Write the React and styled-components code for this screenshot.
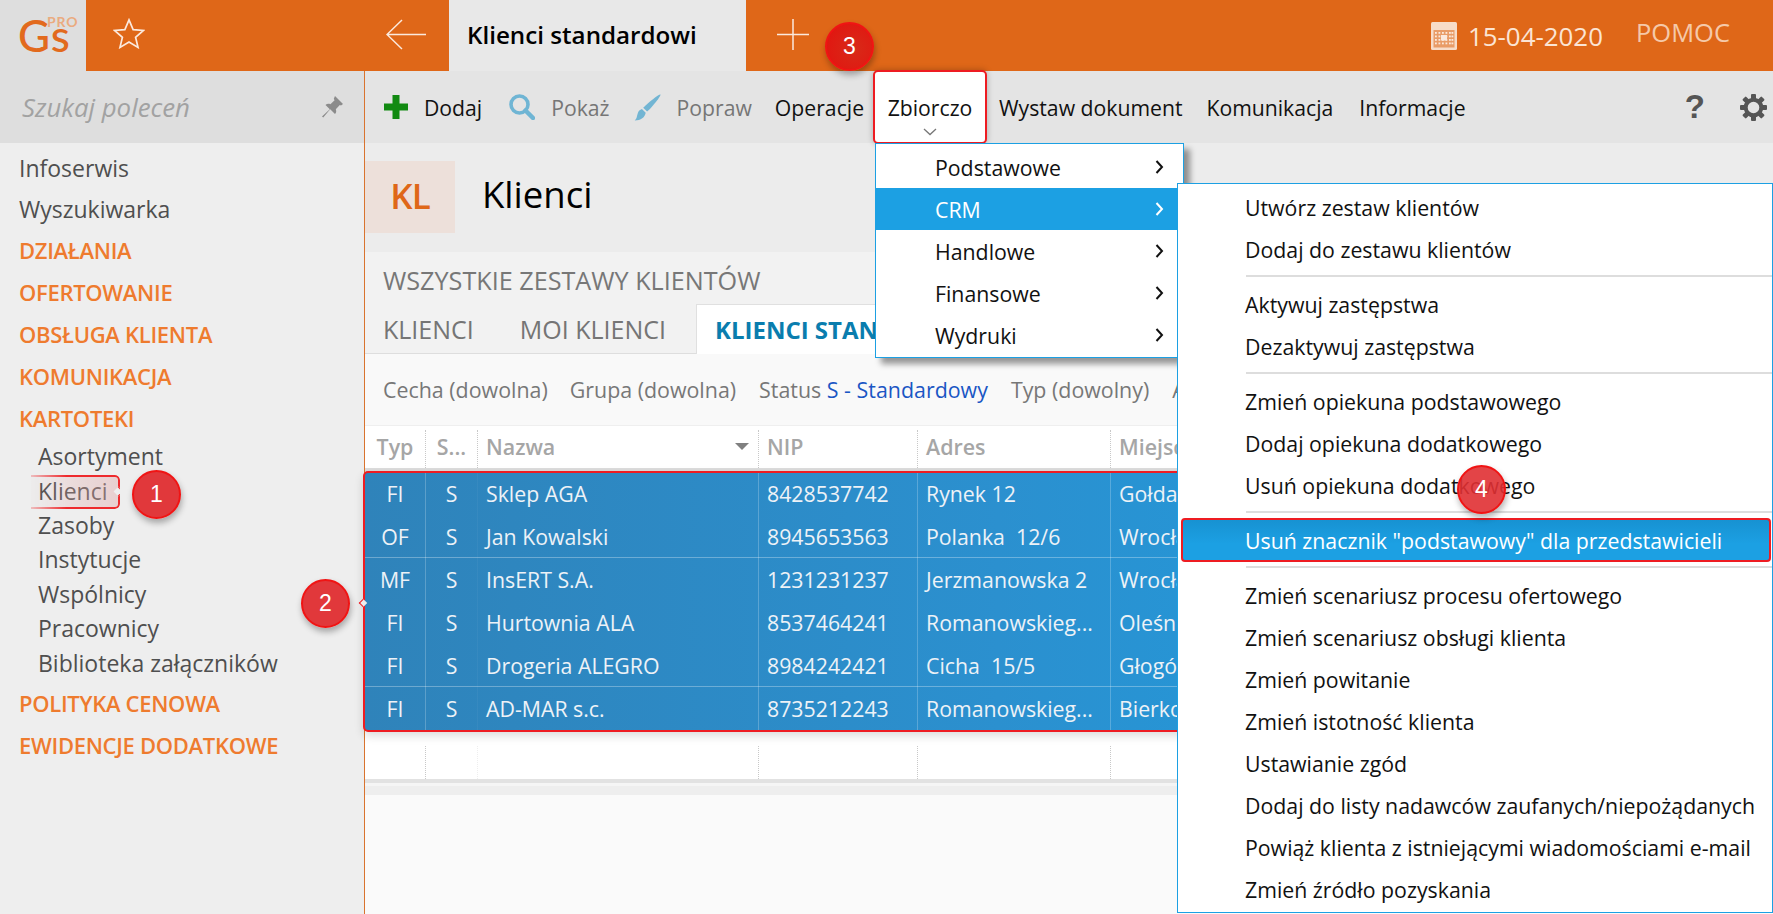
import React from "react";
import styled, { createGlobalStyle } from "styled-components";

const GlobalStyle = createGlobalStyle`
  html, body {
    margin: 0;
    padding: 0;
    background: #fff;
  }
  body {
    font-family: "Open Sans", "Noto Sans", "Liberation Sans", sans-serif;
    color: #111;
  }
  * { box-sizing: border-box; }
`;

const Page = styled.div`
  position: relative;
  width: 1773px;
  height: 914px;
  overflow: hidden;
  display: flex;
  flex-direction: column;
`;

/* top bar */
const TopBar = styled.header`
  flex: 0 0 71px;
  display: flex;
  align-items: stretch;
  background: #df6718;
`;
const LogoCell = styled.div`
  width: 86px;
  background: #dedede;
  padding: 12px 0 0 18px;
`;
const Logo = styled.div`
  position: relative;
  font-family: "Lato", sans-serif;
  font-size: 44px;
  line-height: 46px;
  font-weight: 500;
  color: #e26a1d;
  letter-spacing: 1px;
  span {
    position: absolute;
    left: 29px;
    top: 3px;
    font-size: 14px;
    line-height: 14px;
    font-weight: 700;
    letter-spacing: 0.8px;
    color: #eaab80;
  }
`;
const StarButton = styled.div`
  width: 300px;
  padding: 18px 0 0 27px;
`;
const TabArrow = styled.div`
  width: 63px;
  padding-top: 19px;
`;
const OpenTab = styled.div`
  width: 297px;
  background: #e8e8e8;
  padding-left: 18px;
  display: flex;
  align-items: center;
  font-size: 24.2px;
  font-weight: 600;
  color: #000;
  padding-bottom: 3px;
`;
const AddTab = styled.div`
  padding: 19px 0 0 31px;
`;
const TopRight = styled.div`
  margin-left: auto;
  display: flex;
  align-items: center;
  padding-right: 43px;
`;
const DateText = styled.span`
  margin-left: 11px;
  font-size: 25.9px;
  color: #fbe4d4;
`;
const HelpLink = styled.span`
  margin-left: 33px;
  margin-bottom: 7px;
  font-size: 25.5px;
  color: #f5c9a9;
`;

/* body */
const Body = styled.div`
  flex: 1;
  min-height: 0;
  display: flex;
`;
const Sidebar = styled.nav`
  flex: 0 0 365px;
  background: #eeeeee;
  border-right: 1px solid #d9732e;
`;
const SearchBox = styled.div`
  height: 72px;
  background: #dedede;
  display: flex;
  align-items: center;
  justify-content: space-between;
  padding: 0 21px 0 22px;
  font-style: italic;
  font-size: 25.8px;
  color: #a2a2a2;
`;
const NavList = styled.div`
  padding: 4px 0 0 19px;
`;
const NavLink = styled.div`
  height: 41px;
  display: flex;
  align-items: center;
  font-size: 23px;
  color: #4f4f4f;
`;
const NavSection = styled.div`
  height: 42px;
  display: flex;
  align-items: center;
  font-size: 22px;
  font-weight: 600;
  letter-spacing: -0.3px;
  color: #ee7b2e;
  margin-top: ${(p) => (p.$gap ? "2px" : "0")};
`;
const NavSub = styled.div`
  position: relative;
  width: max-content;
  height: 34.4px;
  display: flex;
  align-items: center;
  margin-left: 19px;
  font-size: 23px;
  color: #4f4f4f;
`;
const NavMark = styled.div`
  position: absolute;
  left: -7px;
  right: -12px;
  top: 2px;
  bottom: -1px;
  border-radius: 0 5px 5px 0;
  border: 2px solid #ee2a2d;
  border-left: 0;
  background: linear-gradient(90deg, rgba(225, 170, 170, 0.1), rgba(225, 170, 170, 0.45));
  -webkit-mask-image: linear-gradient(90deg, rgba(0,0,0,0.25), #000 40%);
  &::after {
    content: "";
    position: absolute;
    right: -4px;
    top: 11px;
    width: 6px;
    height: 6px;
    background: #eee;
    border-top: 1px solid #ee2a2d;
    border-right: 1px solid #ee2a2d;
    transform: rotate(45deg);
  }
`;

const Main = styled.main`
  flex: 1;
  min-width: 0;
  display: flex;
  flex-direction: column;
  background: #ececec;
`;
const Toolbar = styled.div`
  flex: 0 0 72px;
  background: #e4e4e4;
  display: flex;
  align-items: center;
  padding: 0 6px 0 19px;
  font-size: 21.2px;
`;
const ToolButton = styled.div`
  display: flex;
  align-items: center;
  gap: ${(p) => p.$iconGap || 0}px;
  margin-right: ${(p) => p.$after}px;
  color: ${(p) => (p.$muted ? "#767676" : "#111")};
`;
const MarkedButton = styled.div`
  position: relative;
  align-self: stretch;
  margin: -1px 12px -1px 0;
  width: 114px;
  background: #fff;
  border: 2px solid #ee1c22;
  border-radius: 5px;
  box-shadow: 0 0 6px rgba(0, 0, 0, 0.25);
  display: flex;
  align-items: center;
  justify-content: center;
  color: #111;
  svg {
    position: absolute;
    bottom: 6px;
    left: 48px;
  }
`;
const ToolIcons = styled.div`
  margin-left: auto;
  display: flex;
  align-items: center;
  gap: 35px;
  font-family: "Liberation Sans", sans-serif;
  font-size: 33px;
  font-weight: 700;
  color: #555;
`;

const Heading = styled.div`
  flex: 0 0 109px;
  display: flex;
  align-items: flex-start;
  padding-top: 18px;
`;
const HeadingBadge = styled.div`
  width: 90px;
  height: 72px;
  background: #ede0da;
  color: #df6718;
  font-size: 35px;
  font-weight: 600;
  letter-spacing: -1px;
  display: flex;
  align-items: center;
  justify-content: center;
  padding-bottom: 4px;
`;
const HeadingText = styled.h1`
  margin: 0 0 0 27px;
  height: 72px;
  padding-bottom: 6px;
  display: flex;
  align-items: center;
  font-size: 36.5px;
  font-weight: 400;
  color: #000;
`;

const Panel = styled.section`
  flex: 1;
  background: #fafafa;
  display: flex;
  flex-direction: column;
`;
const PanelTitle = styled.div`
  height: 52px;
  background: #f2f2f2;
  padding: 12px 0 0 18px;
  font-size: 25.2px;
  line-height: 32px;
  color: #777;
  white-space: nowrap;
`;
const Tabs = styled.div`
  height: 50px;
  background: #f2f2f2;
  border-bottom: 1px solid #dedede;
  display: flex;
  padding-left: 18px;
  font-size: 25px;
  white-space: nowrap;
`;
const PanelTab = styled.div`
  display: flex;
  align-items: center;
  color: #757575;
  margin-right: 46px;
`;
const ActiveTab = styled.div`
  display: flex;
  align-items: center;
  padding: 0 18px 0 18px;
  margin: 0 0 -1px -16px;
  background: #fff;
  border: 1px solid #e0e0e0;
  border-bottom: 0;
  font-size: 24px;
  font-weight: 700;
  color: #0a7dae;
`;
const FilterBar = styled.div`
  height: 71px;
  background: #f9f9f9;
  display: flex;
  align-items: center;
  padding-left: 18px;
  font-size: 21.4px;
  color: #777;
  white-space: nowrap;
`;
const Filter = styled.span`
  margin-right: ${(p) => p.$after}px;
  b {
    font-weight: 400;
    color: #1a56c4;
  }
`;

const cols = "61px 52px 281px 159px 193px 1fr";
const HeaderRow = styled.div`
  height: 47px;
  background: #fff;
  border-top: 1px solid #efefef;
  border-bottom: 4px solid #dcdcdc;
  display: grid;
  grid-template-columns: ${cols};
  font-size: 21.4px;
  font-weight: 600;
  color: #a6a6a6;
`;
const HeaderCell = styled.div`
  position: relative;
  display: flex;
  align-items: center;
  justify-content: ${(p) => (p.$center ? "center" : "space-between")};
  padding: ${(p) => (p.$center ? "0" : "0 9px 0 8px")};
  border-right: 1px dotted #c8c8c8;
  margin-top: 4px;
  padding-bottom: 5px;
  white-space: nowrap;
  overflow: hidden;
`;
const SortArrow = styled.i`
  width: 0;
  height: 0;
  border-left: 7px solid transparent;
  border-right: 7px solid transparent;
  border-top: 7px solid #808080;
`;
const RowsArea = styled.div`
  position: relative;
  height: 259px;
  background: linear-gradient(90deg, #2f83ba, #2b90cf 45%, #1ca0e3 95%);
`;
const Row = styled.div`
  height: 43px;
  display: grid;
  grid-template-columns: ${cols};
  font-size: 21.3px;
  color: #edf2f7;
  box-shadow: ${(p) => (p.$line ? "inset 0 -1px 0 rgba(255,255,255,0.3)" : "none")};
`;
const Cell = styled.div`
  display: flex;
  align-items: center;
  justify-content: ${(p) => (p.$center ? "center" : "flex-start")};
  padding-left: ${(p) => (p.$center ? 0 : 8)}px;
  border-right: 1px solid rgba(255, 255, 255, ${(p) => (p.$faint ? 0.04 : 0.22)});
  white-space: pre;
  overflow: hidden;
`;
const RowsMark = styled.div`
  position: absolute;
  left: -2px;
  right: 0;
  top: -1px;
  bottom: -1px;
  border: 2px solid #ee1c22;
  border-radius: 5px;
  box-shadow: 0 4px 10px rgba(0, 0, 0, 0.14);
  &::before {
    content: "";
    position: absolute;
    left: -5px;
    top: 127px;
    width: 5px;
    height: 5px;
    background: #eee;
    border-left: 1px solid #ee1c22;
    border-bottom: 1px solid #ee1c22;
    transform: rotate(45deg);
  }
`;
const BlankRow = styled.div`
  height: 49px;
  background: #fff;
  display: grid;
  grid-template-columns: ${cols};
  padding-top: 15px;
  border-bottom: 1px solid #e2e2e2;
`;
const BlankCell = styled.div`
  border-right: 1px dotted ${(p) => (p.$faint ? "#eee" : "#c8c8c8")};
`;
const GridEdge = styled.div`
  height: 6px;
  background: #e2e2e2;
  border-bottom: 3px solid #f5f5f5;
`;
const ScrollStrip = styled.div`
  height: 9px;
  background: #eeeeee;
`;

/* menus */
const Menu = styled.div`
  position: absolute;
  left: ${(p) => p.$left}px;
  top: ${(p) => p.$top}px;
  width: ${(p) => p.$width}px;
  height: ${(p) => p.$height}px;
  background: #fff;
  border: 1px solid #1ca0e3;
  padding-top: 2px;
  font-size: 21.3px;
  color: #111;
  box-shadow: ${(p) => (p.$shadow ? "6px 6px 6px rgba(0,0,0,0.4)" : "none")};
  overflow: hidden;
`;
const MenuItem = styled.div`
  height: 42px;
  display: flex;
  align-items: center;
  justify-content: space-between;
  padding: 0 19px 0 ${(p) => p.$indent}px;
  background: ${(p) => (p.$active ? "#1ca0e3" : "transparent")};
  color: ${(p) => (p.$active ? "#fff" : "inherit")};
  white-space: pre;
`;
const MarkedItem = styled.div`
  height: 44px;
  margin: -1px 1px -1px 3px;
  padding-left: 62px;
  display: flex;
  align-items: center;
  background: linear-gradient(180deg, #1792d2, #1ca0e3 60%);
  border: 2px solid #ee1c22;
  border-radius: 4px;
  color: #fff;
`;
const MenuSeparator = styled.div`
  height: 2px;
  margin: 5px 0 6px 68px;
  background: #dddddd;
`;

/* numbered markers */
const Marker = styled.div`
  position: absolute;
  left: ${(p) => p.$left}px;
  top: ${(p) => p.$top}px;
  width: 49px;
  height: 49px;
  border-radius: 50%;
  border: 2px solid #f01414;
  background: ${(p) => p.$fill || "rgba(224, 48, 51, 0.96)"};
  box-shadow: 1px 4px 6px rgba(0, 0, 0, 0.3);
  display: flex;
  align-items: center;
  justify-content: center;
  font-family: "Liberation Sans", sans-serif;
  font-size: 23px;
  color: #fff;
`;

const Star = () => (
  <svg width="32" height="31" viewBox="0 0 34 33" fill="none" stroke="#fbe9dd" strokeWidth="1.8" strokeLinejoin="miter">
    <path d="M17 2l4.4 10.4 11 .9-8.400 7.200 2.600 10.800L17 25.500 7.400 31.300 10 20.500 1.600 13.300l11-.9z" />
  </svg>
);
const BackArrow = () => (
  <svg width="40" height="31" viewBox="0 0 40 31" fill="none" stroke="#fbe9dd" strokeWidth="1.5">
    <path d="M40 15.500H1M16 1L1 15.500 16 30" />
  </svg>
);
const PlusThin = () => (
  <svg width="32" height="31" viewBox="0 0 32 31" fill="none" stroke="#fbe9dd" strokeWidth="1.5">
    <path d="M0 15.500h32M16 0v31" />
  </svg>
);
const CalendarIcon = () => (
  <svg width="26" height="28" viewBox="0 0 26 28">
    <rect x="0" y="0" width="26" height="28" rx="1.500" fill="#f7dcc8" />
    <rect x="2.500" y="8" width="21" height="17.500" fill="#df6718" opacity="0.55" />
    <g fill="#fbe9dd">
      {[10, 13.5, 17, 20.5].map((y) =>
        [4, 7.5, 11, 14.5, 18, 20.500].map((x) => <rect key={`${x}-${y}`} x={x} y={y} width="1.800" height="1.800" />)
      )}
    </g>
    <rect x="10" y="13" width="6" height="5.500" fill="#fbe9dd" />
  </svg>
);
const PinIcon = () => (
  <svg width="21" height="22" viewBox="0 0 21 22" fill="#8b8b8b">
    <path d="M13 0l8 8-2 1.500-1.200-.6-4 4.300c.8 2 .4 3.600-.8 4.800L8.200 13.200 1.200 21.500 0 20.500l7.800-7.200L3.500 9c1.200-1.200 3-1.600 4.900-.8l4.200-4-.8-1.400z" />
  </svg>
);
const GreenPlus = () => (
  <svg width="24" height="24" viewBox="0 0 24 24" fill="#128a12">
    <path d="M8.500 0h7v8.500H24v7h-8.500V24h-7v-8.500H0v-7h8.500z" />
  </svg>
);
const SearchIcon = () => (
  <svg width="26" height="26" viewBox="0 0 26 26" fill="none" stroke="#6fb5d4">
    <circle cx="10.500" cy="10.500" r="8.500" strokeWidth="3.600" />
    <path d="M16.500 16.500l7.500 7.500" strokeWidth="4.500" strokeLinecap="round" />
  </svg>
);
const BrushIcon = () => (
  <svg width="27" height="27" viewBox="0 0 27 27" fill="#72b5d3">
    <path d="M26.500.5c.6 1-7.200 11.500-13.400 17l-3.900-3.700C14.500 8.200 25.500-.4 26.500.5z" />
    <path d="M7.900 15.100l3.800 3.600c-.6 4.500-4.800 7.600-11 7.800 2.300-2 2-4 3-7 .7-2.200 2.200-3.800 4.200-4.400z" />
  </svg>
);
const GearIcon = () => (
  <svg width="27" height="27" viewBox="0 0 27 27" fill="#555">
    {[0, 45, 90, 135, 180, 225, 270, 315].map((a) => (
      <rect key={a} x="11" y="0" width="5" height="6" rx="1" transform={`rotate(${a} 13.500 13.500)`} />
    ))}
    <circle cx="13.500" cy="13.500" r="7.800" fill="none" stroke="#555" strokeWidth="4" />
  </svg>
);
const Chevron = ({ color }) => (
  <svg width="9" height="14" viewBox="0 0 9 14" fill="none" stroke={color || "#111"} strokeWidth="2">
    <path d="M1.500 1l5.500 6-5.500 6" />
  </svg>
);
const ChevronDown = () => (
  <svg width="14" height="8" viewBox="0 0 14 8" fill="none" stroke="#777" strokeWidth="1.300">
    <path d="M1 1l6 5.500L13 1" />
  </svg>
);

const clients = [
  ["FI", "S", "Sklep AGA", "8428537742", "Rynek 12", "Gołdap"],
  ["OF", "S", "Jan Kowalski", "8945653563", "Polanka  12/6", "Wrocław"],
  ["MF", "S", "InsERT S.A.", "1231231237", "Jerzmanowska 2", "Wrocław"],
  ["FI", "S", "Hurtownia ALA", "8537464241", "Romanowskieg...", "Oleśnica"],
  ["FI", "S", "Drogeria ALEGRO", "8984242421", "Cicha  15/5", "Głogów"],
  ["FI", "S", "AD-MAR s.c.", "8735212243", "Romanowskieg...", "Bierkowice"],
];

const crmGroups = [
  ["Utwórz zestaw klientów", "Dodaj do zestawu klientów"],
  ["Aktywuj zastępstwa", "Dezaktywuj zastępstwa"],
  ["Zmień opiekuna podstawowego", "Dodaj opiekuna dodatkowego", "Usuń opiekuna dodatkowego"],
];
const crmLast = [
  "Zmień scenariusz procesu ofertowego",
  "Zmień scenariusz obsługi klienta",
  "Zmień powitanie",
  "Zmień istotność klienta",
  "Ustawianie zgód",
  "Dodaj do listy nadawców zaufanych/niepożądanych",
  "Powiąż klienta z istniejącymi wiadomościami e-mail",
  "Zmień źródło pozyskania",
];

export default function App() {
  return (
    <Page>
      <GlobalStyle />
      <TopBar>
        <LogoCell>
          <Logo>
            Gs<span>PRO</span>
          </Logo>
        </LogoCell>
        <StarButton>
          <Star />
        </StarButton>
        <TabArrow>
          <BackArrow />
        </TabArrow>
        <OpenTab>Klienci standardowi</OpenTab>
        <AddTab>
          <PlusThin />
        </AddTab>
        <TopRight>
          <CalendarIcon />
          <DateText>15-04-2020</DateText>
          <HelpLink>POMOC</HelpLink>
        </TopRight>
      </TopBar>

      <Body>
        <Sidebar>
          <SearchBox>
            Szukaj poleceń
            <PinIcon />
          </SearchBox>
          <NavList>
            <NavLink>Infoserwis</NavLink>
            <NavLink>Wyszukiwarka</NavLink>
            <NavSection>DZIAŁANIA</NavSection>
            <NavSection>OFERTOWANIE</NavSection>
            <NavSection>OBSŁUGA KLIENTA</NavSection>
            <NavSection>KOMUNIKACJA</NavSection>
            <NavSection>KARTOTEKI</NavSection>
            <NavSub>Asortyment</NavSub>
            <NavSub>
              <NavMark />
              Klienci
            </NavSub>
            <NavSub>Zasoby</NavSub>
            <NavSub>Instytucje</NavSub>
            <NavSub>Wspólnicy</NavSub>
            <NavSub>Pracownicy</NavSub>
            <NavSub>Biblioteka załączników</NavSub>
            <NavSection $gap>POLITYKA CENOWA</NavSection>
            <NavSection>EWIDENCJE DODATKOWE</NavSection>
          </NavList>
        </Sidebar>

        <Main>
          <Toolbar>
            <ToolButton $iconGap={16} $after={27}>
              <GreenPlus />
              Dodaj
            </ToolButton>
            <ToolButton $iconGap={16} $after={24} $muted>
              <SearchIcon />
              Pokaż
            </ToolButton>
            <ToolButton $iconGap={16} $after={23} $muted>
              <BrushIcon />
              Popraw
            </ToolButton>
            <ToolButton $after={9}>Operacje</ToolButton>
            <MarkedButton>
              Zbiorczo
              <ChevronDown />
            </MarkedButton>
            <ToolButton $after={24}>Wystaw dokument</ToolButton>
            <ToolButton $after={26}>Komunikacja</ToolButton>
            <ToolButton $after={0}>Informacje</ToolButton>
            <ToolIcons>
              ?
              <GearIcon />
            </ToolIcons>
          </Toolbar>

          <Heading>
            <HeadingBadge>KL</HeadingBadge>
            <HeadingText>Klienci</HeadingText>
          </Heading>

          <Panel>
            <PanelTitle>WSZYSTKIE ZESTAWY KLIENTÓW</PanelTitle>
            <Tabs>
              <PanelTab>KLIENCI</PanelTab>
              <PanelTab>MOI KLIENCI</PanelTab>
              <ActiveTab>KLIENCI STANDARDOWI</ActiveTab>
            </Tabs>
            <FilterBar>
              <Filter $after={22}>Cecha (dowolna)</Filter>
              <Filter $after={23}>Grupa (dowolna)</Filter>
              <Filter $after={23}>
                Status <b>S - Standardowy</b>
              </Filter>
              <Filter $after={23}>Typ (dowolny)</Filter>
              <Filter $after={22}>Aktywny</Filter>
            </FilterBar>
            <HeaderRow>
              <HeaderCell $center>Typ</HeaderCell>
              <HeaderCell $center>S...</HeaderCell>
              <HeaderCell>
                Nazwa
                <SortArrow />
              </HeaderCell>
              <HeaderCell>NIP</HeaderCell>
              <HeaderCell>Adres</HeaderCell>
              <HeaderCell>Miejscowość</HeaderCell>
            </HeaderRow>
            <RowsArea>
              {clients.map((row, i) => (
                <Row key={row[3]} $line={i === 1 || i === 4}>
                  {row.map((value, c) => (
                    <Cell key={c} $center={c < 2} $faint={c === 1}>
                      {value}
                    </Cell>
                  ))}
                </Row>
              ))}
              <RowsMark />
            </RowsArea>
            <BlankRow>
              <BlankCell />
              <BlankCell $faint />
              <BlankCell />
              <BlankCell />
              <BlankCell />
            </BlankRow>
            <GridEdge />
            <ScrollStrip />
          </Panel>
        </Main>
      </Body>

      <Menu $left={875} $top={143} $width={309} $height={215} $shadow>
        <MenuItem $indent={59}>
          Podstawowe
          <Chevron />
        </MenuItem>
        <MenuItem $indent={59} $active>
          CRM
          <Chevron color="#fff" />
        </MenuItem>
        <MenuItem $indent={59}>
          Handlowe
          <Chevron />
        </MenuItem>
        <MenuItem $indent={59}>
          Finansowe
          <Chevron />
        </MenuItem>
        <MenuItem $indent={59}>
          Wydruki
          <Chevron />
        </MenuItem>
      </Menu>

      <Menu $left={1177} $top={183} $width={596} $height={730}>
        {crmGroups.map((group) => (
          <React.Fragment key={group[0]}>
            {group.map((label) => (
              <MenuItem key={label} $indent={67}>
                {label}
              </MenuItem>
            ))}
            <MenuSeparator />
          </React.Fragment>
        ))}
        <MarkedItem>Usuń znacznik "podstawowy" dla przedstawicieli</MarkedItem>
        <MenuSeparator />
        {crmLast.map((label) => (
          <MenuItem key={label} $indent={67}>
            {label}
          </MenuItem>
        ))}
      </Menu>

      <Marker $left={132} $top={470}>1</Marker>
      <Marker $left={301} $top={579}>2</Marker>
      <Marker $left={825} $top={22} $fill="radial-gradient(circle at 60% 55%, #d82a18, #e3120f)">3</Marker>
      <Marker $left={1457} $top={465} $fill="rgba(224, 48, 51, 0.9)">4</Marker>
    </Page>
  );
}
